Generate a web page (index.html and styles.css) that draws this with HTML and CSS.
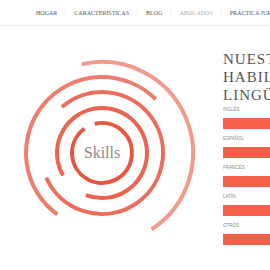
FILE: index.html
```html
<!DOCTYPE HTML>
<html lang="es">
<head>
    <title>Abogados - Habilidades</title>
    <meta charset="utf-8">
    <link rel="stylesheet" href="styles.css">
</head>
<body>

<div id="nav">
    <a href="#" class="item">Hogar</a>
    <a href="#" class="item">Caracteristicas</a>
    <a href="#" class="item">Blog</a>
    <a href="#" class="item active">Abogados</a>
    <a href="#" class="item">Práctica jurídica</a>
</div>

<div id="main">
    <div class="rings">
        <svg width="210" height="244" viewBox="0 0 210 244">
            <path class="r1" d="M94.74 97.89 A30 30 0 1 1 84.37 102.73"/>
            <path class="r2" d="M63.03 149.5 A45 45 0 1 1 85.87 169.01"/>
            <path class="r3" d="M61.98 80.96 A61 61 0 1 1 46.28 151.81"/>
            <path class="r4" d="M57.33 188.49 A76 76 0 1 1 155.74 73.26"/>
            <path class="r5" d="M81.53 38.33 A91 91 0 0 1 151.56 203.32"/>
            <text x="102" y="132" text-anchor="middle">Skills</text>
        </svg>
    </div>

    <div id="skills">
        <h2 class="title">Nuestra habilidades lingüísticas</h2>

        <div class="skill">
            <div class="label">Inglés</div>
            <div class="bar"></div>
        </div>
        <div class="skill">
            <div class="label">Español</div>
            <div class="bar"></div>
        </div>
        <div class="skill">
            <div class="label">Francés</div>
            <div class="bar"></div>
        </div>
        <div class="skill">
            <div class="label">Latín</div>
            <div class="bar"></div>
        </div>
        <div class="skill">
            <div class="label">Otros</div>
            <div class="bar"></div>
        </div>
    </div>
</div>

</body>
</html>
```

FILE: styles.css
```css
html {
    height: 100%;
    overflow: hidden;
}
body {
    margin: 0;
    padding: 0;
    background: #ffffff;
    color: #555555;
    font-family: "Liberation Serif", serif;
    overflow: hidden;
}

#nav {
    display: flex;
    align-items: center;
    height: 25px;
    padding-left: 28px;
    border-bottom: 1px solid #eeeeee;
    white-space: nowrap;
}

#nav .item {
    font-size: 6px;
    line-height: 8px;
    text-transform: uppercase;
    color: #555555;
    text-decoration: none;
    padding: 0 8px;
    border-left: 1px solid #f2f2f2;
}

#nav .item:first-child {
    border-left: none;
}

#nav .active {
    color: #b0b0b0;
}

#main {
    display: flex;
}

.rings {
    flex: none;
    width: 223px;
}

.rings svg {
    display: block;
}

.rings path {
    fill: none;
    stroke-width: 4;
}

.r1 { stroke: #e9553f; }
.r2 { stroke: #eb6450; }
.r3 { stroke: #ec6d5b; }
.r4 { stroke: #ee7d6d; }
.r5 { stroke: #f29a8c; }

.rings text {
    font-family: "Liberation Serif", serif;
    font-size: 16px;
    fill: #8a8a8a;
}

#skills {
    flex: none;
    width: 130px;
    padding-top: 24px;
}

.title {
    margin: 0 0 2px;
    font-size: 15px;
    line-height: 18px;
    font-weight: normal;
    letter-spacing: 1px;
    text-transform: uppercase;
    color: #555555;
}

.skill {
    margin-bottom: 6px;
}

.label {
    font-family: "Liberation Sans", sans-serif;
    font-size: 4.5px;
    line-height: 8px;
    text-transform: uppercase;
    color: #8a8a8a;
    margin-bottom: 4px;
}

.bar {
    height: 11px;
    background: #f4604a;
}
```
